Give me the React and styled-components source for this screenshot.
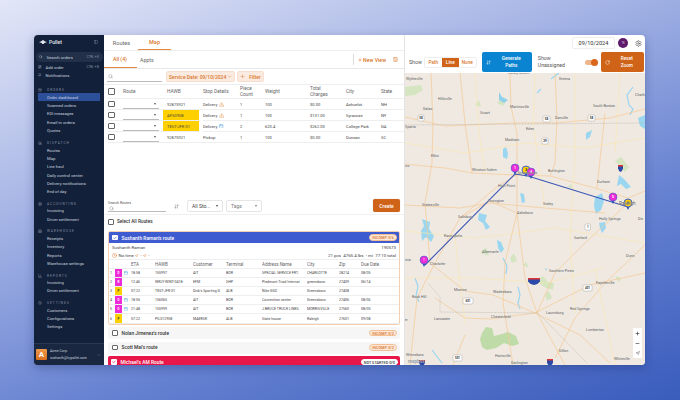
import React from 'react'
import styled, { createGlobalStyle } from 'styled-components'
import { Search, FilePlus, Bell, Package, Truck, CircleDollarSign, Warehouse, BarChart3, Settings, ChevronDown, Plus, Columns3, ArrowDownUp, Clock, RotateCw, Check, AlertTriangle, Calendar, PanelLeft, Minus, Navigation } from 'lucide-react'

const GlobalStyle = createGlobalStyle`
  html, body { margin: 0; padding: 0; height: 100%; }
  body {
    width: 680px; height: 400px; overflow: hidden;
    background: linear-gradient(160deg, #e2e6f7 0%, #a9b7e6 32%, #6480d0 68%, #3a5cbc 100%);
    font-family: Roboto, "Liberation Sans", sans-serif;
    color: #333;
  }
  * { box-sizing: border-box; }
`

const Page = styled.div`
  padding: 35px 35px 35px 34px;
  height: 400px;
`
const Window = styled.div`
  display: flex;
  height: 330px;
  background: #fff;
  border-radius: 4px;
  overflow: hidden;
  box-shadow: 0 3px 10px rgba(30, 50, 110, 0.35);
`

/* sidebar */
const Sidebar = styled.aside`
  width: 70px;
  flex: none;
  background: #13203a;
  color: #c7d0de;
  display: flex;
  flex-direction: column;
  font-size: 4.2px;
`
const Brand = styled.div`
  display: flex;
  align-items: center;
  height: 14px;
  padding: 0 6px 0 5px;
  font-size: 5px;
  font-weight: 500;
  color: #e4e8ef;
  gap: 2px;
`
const BrandMark = styled.svg`
  width: 8px;
  height: 4.5px;
`
const BrandIcon = styled(PanelLeft)`
  margin-left: auto;
  color: #8c97aa;
`
const SearchBox = styled.div`
  display: flex;
  align-items: center;
  gap: 4px;
  height: 10px;
  margin: 3px 1px 1px 2px;
  padding: 0 4px 0 3px;
  border-radius: 5px;
  background: #223049;
  color: #c7d0de;
  font-size: 4.3px;
`
const Shortcut = styled.span`
  margin-left: auto;
  font-size: 3px;
  color: #8c97aa;
`
const TopItem = styled.div`
  display: flex;
  align-items: center;
  gap: 4px;
  height: 8px;
  padding: 0 5px 0 4px;
`
const Section = styled.div`
  display: flex;
  align-items: center;
  gap: 5px;
  height: 6px;
  margin-top: ${p => p.$gap}px;
  padding-left: 4px;
  font-size: 3.2px;
  letter-spacing: 1px;
  color: #8591a5;
`
const NavItem = styled.div`
  display: flex;
  align-items: center;
  height: 8.3px;
  margin: 0 4px;
  padding-left: 9px;
  background: ${p => (p.$active ? '#2d4f99' : 'transparent')};
`
const Account = styled.div`
  margin-top: auto;
  height: 22px;
  flex: none;
  display: flex;
  align-items: center;
  gap: 3px;
  padding: 0 3px 0 2px;
  background: #1a2740;
  border-top: 1px solid #2a3851;
`
const AccountLogo = styled.div`
  width: 11px;
  height: 11px;
  border-radius: 1px;
  background: linear-gradient(180deg, #f09a4a, #d96f1d);
  color: #fff;
  font-size: 8px;
  font-weight: 700;
  display: flex;
  align-items: center;
  justify-content: center;
`
const AccountText = styled.div`
  font-size: 3.4px;
  line-height: 6.5px;
  color: #c7d0de;
  white-space: nowrap;
`
const AccountChevron = styled(ChevronDown)`
  margin-left: auto;
  color: #8c97aa;
`

/* main column */
const Main = styled.main`
  width: 301px;
  flex: none;
  display: flex;
  flex-direction: column;
  border-right: 1px solid #e4e4e4;
  min-width: 0;
`
const TopTabs = styled.div`
  display: flex;
  flex: none;
  height: 16px;
  padding-left: 1px;
  border-bottom: 1px solid #eee;
`
const TopTab = styled.div`
  width: 33px;
  display: flex;
  align-items: center;
  justify-content: center;
  font-size: 5.6px;
  color: ${p => (p.$active ? '#d9772d' : '#666')};
  font-weight: ${p => (p.$active ? 500 : 400)};
  border-bottom: ${p => (p.$active ? '1px solid #e58a42' : 'none')};
`
const SubTabs = styled.div`
  display: flex;
  flex: none;
  align-items: center;
  height: 18px;
  border-bottom: 1px solid #e8e8e8;
  font-size: 5.2px;
`
const SubTab = styled.div`
  width: ${p => p.$w}px;
  height: 100%;
  display: flex;
  align-items: center;
  padding-left: ${p => p.$pad}px;
  color: ${p => (p.$active ? '#d9772d' : '#666')};
  font-weight: ${p => (p.$active ? 500 : 400)};
  border-bottom: ${p => (p.$active ? '1px solid #e58a42' : 'none')};
`
const NewView = styled.div`
  margin-left: auto;
  display: flex;
  align-items: center;
  gap: 1px;
  height: 11px;
  padding: 0 6px 0 4px;
  border-left: 1px solid #ddd;
  color: #d9772d;
  font-weight: 500;
  font-size: 5.2px;
`
const ColumnsIcon = styled(Columns3)`
  margin-left: 6px;
`
const FilterRow = styled.div`
  display: flex;
  flex: none;
  align-items: center;
  gap: 2px;
  height: 16px;
  padding-left: 3px;
  border-bottom: 1px solid #eee;
`
const SearchField = styled.div`
  width: 55px;
  height: 11px;
  display: flex;
  align-items: center;
  padding-left: 1px;
  border-bottom: 1px solid #bbb;
  color: #888;
  margin-right: 2px;
`
const Chip = styled.div`
  display: flex;
  align-items: center;
  gap: ${p => p.$gap ?? 1}px;
  height: 11px;
  padding: 0 2px;
  border-radius: 2px;
  background: #fbeadf;
  border: 1px solid #f6dfcf;
  color: #d9772d;
  font-size: 5px;
  font-weight: 500;
  white-space: nowrap;
`
const Table = styled.div`
  display: grid;
  flex: none;
  grid-template-columns: 15px 44px 36px 37px 25px 45px 36px 35px 1fr;
  padding-left: 4px;
  font-size: 4.1px;
  color: #444;
`
const HeadCell = styled.div`
  height: 14px;
  display: flex;
  align-items: center;
  font-size: 4.8px;
  line-height: 6px;
  color: #666;
  border-bottom: 1px solid #eee;
  white-space: nowrap;
`
const Cell = styled.div`
  height: 11px;
  display: flex;
  align-items: center;
  gap: 2px;
  border-bottom: 1px solid #eee;
  white-space: nowrap;
  margin: ${p => (p.$hawb ? '0 4px 0 -4px' : 0)};
  padding-left: ${p => (p.$hawb ? '4px' : 0)};
  background: ${p => (p.$hawb ? '#ffd000' : 'transparent')};
`
const Box = styled.span`
  width: ${p => p.$size ?? 6.5}px;
  height: ${p => p.$size ?? 6.5}px;
  flex: none;
  border: 1px solid #666;
  border-radius: 1px;
  background: #fff;
`
const RouteSelect = styled.div`
  width: 36px;
  height: 9px;
  margin-top: 1px;
  display: flex;
  align-items: center;
  justify-content: flex-end;
  padding-right: 3px;
  border-bottom: 1px solid #bbb;
  color: #555;
`
const Caret = styled.span`
  width: 0;
  height: 0;
  border-left: 1.5px solid transparent;
  border-right: 1.5px solid transparent;
  border-top: 2px solid currentColor;
`
const Spacer = styled.div`
  flex: none;
  height: 48px;
`

/* route panel */
const RouteTools = styled.div`
  display: flex;
  flex: none;
  align-items: flex-end;
  height: 24px;
  padding: 0 4px 2px 4px;
  border-bottom: 1px solid #f0f0f0;
`
const RouteSearch = styled.div`
  width: 58px;
  font-size: 3.6px;
  color: #555;
`
const RouteSearchInput = styled.div`
  height: 7px;
  display: flex;
  align-items: center;
  padding-left: 1px;
  border-bottom: 1px solid #bbb;
  color: #888;
`
const SortIcon = styled(ArrowDownUp)`
  color: #777;
  margin: 0 8.5px 3px 7.5px;
`
const Dropdown = styled.div`
  width: 36px;
  height: 12px;
  display: flex;
  align-items: center;
  justify-content: space-between;
  margin-right: 3px;
  padding: 0 4px;
  border: 1px solid #e5e5e5;
  border-radius: 2px;
  font-size: 5px;
  color: ${p => p.$color};
`
const CreateButton = styled.div`
  margin-left: auto;
  width: 27px;
  height: 13px;
  display: flex;
  align-items: center;
  justify-content: center;
  border-radius: 2px;
  background: #cf6317;
  color: #fff;
  font-size: 4.9px;
  font-weight: 500;
  box-shadow: 0 0 1px rgba(0,0,0,.3);
`
const SelectAll = styled.div`
  display: flex;
  flex: none;
  align-items: center;
  gap: 3px;
  height: 13px;
  margin-bottom: 3px;
  padding-left: 4px;
  font-size: 4.7px;
  font-weight: 500;
  color: #333;
`
const RouteCard = styled.div`
  flex: none;
  margin: 0 4px;
  border: 1px solid #f3cfb0;
  border-radius: 2px;
  overflow: hidden;
`
const RouteHeader = styled.div`
  display: flex;
  flex: none;
  align-items: center;
  gap: 4px;
  height: 11px;
  padding: 0 2px 0 3px;
  background: ${p => p.$bg};
  color: #fff;
  font-size: 4.9px;
  font-weight: 500;
`
const Badge = styled.span`
  margin-left: auto;
  height: 6.5px;
  padding: 0 2px;
  display: flex;
  align-items: center;
  border-radius: 3.5px;
  border: 1px solid ${p => (p.$white ? '#fff' : '#f3c096')};
  background: ${p => (p.$white ? '#fff' : '#fde8d8')};
  color: ${p => (p.$white ? '#333' : '#d9772d')};
  font-size: 3.8px;
  font-weight: 500;
  white-space: nowrap;
`
const DriverInfo = styled.div`
  display: flex;
  justify-content: space-between;
  padding: 0 3px;
  height: 8.5px;
  align-items: center;
  font-size: 4.4px;
  color: #444;
`
const StatusRow = styled(DriverInfo)`
  border-bottom: 1px solid #eee;
`
const NoTime = styled.span`
  display: flex;
  align-items: center;
  gap: 1.5px;
  color: #d9772d;
  & > em { font-style: normal; color: #444; }
`
const StopGrid = styled.div`
  display: grid;
  grid-template-columns: 6px 7px 9px 24px 38px 33px 36px 45px 32px 22px 1fr;
  font-size: 3.6px;
  color: #444;
`
const StopHead = styled.div`
  height: 9px;
  display: flex;
  align-items: center;
  font-size: 4.5px;
  color: #666;
  border-bottom: 1px solid #eee;
  white-space: nowrap;
  overflow: hidden;
`
const StopCell = styled.div`
  height: 9.1px;
  display: flex;
  align-items: center;
  border-bottom: 1px solid #eee;
  white-space: nowrap;
  overflow: hidden;
`
const NumCell = styled(StopCell)`
  padding-left: 1px;
`
const TypeTag = styled(StopCell)`
  justify-content: center;
  background: ${p => (p.$kind === 'P' ? '#ffd000' : '#ee2bd8')};
  color: ${p => (p.$kind === 'P' ? '#333' : '#fff')};
  font-size: 3px;
  font-weight: 700;
`
const MiniCal = styled(Calendar)`
  color: #4a9edb;
  margin-left: 2px;
`
const RouteRow = styled.div`
  display: flex;
  flex: none;
  align-items: center;
  gap: 4px;
  height: 12px;
  margin: 2.5px 4px 0;
  padding: 0 3px 0 4px;
  background: #f6f6f6;
  border-radius: 2px;
  font-size: 4.8px;
  font-weight: 500;
  color: #333;
`
const RedRow = styled(RouteHeader)`
  height: 12px;
  margin: 2.5px 4px 0;
  border-radius: 2px 2px 0 0;
`
const WhiteCheck = styled.span`
  width: 5.5px;
  height: 5.5px;
  flex: none;
  border-radius: 1px;
  background: #fff;
  display: inline-flex;
  align-items: center;
  justify-content: center;
  color: ${p => p.$color};
`

/* map column */
const MapColumn = styled.section`
  flex: 1;
  display: flex;
  flex-direction: column;
  min-width: 0;
`
const MapTop = styled.div`
  display: flex;
  flex: none;
  align-items: center;
  justify-content: flex-end;
  gap: 3px;
  height: 16px;
  padding-right: 3px;
`
const DateBox = styled.div`
  width: 43px;
  height: 12px;
  display: flex;
  align-items: center;
  justify-content: center;
  border: 1px solid #eee;
  border-radius: 2px;
  font-size: 5.6px;
  color: #333;
`
const Avatar = styled.div`
  width: 10px;
  height: 10px;
  border-radius: 50%;
  background: #5d1a6b;
  color: #e8d8ee;
  font-size: 2.6px;
  display: flex;
  align-items: center;
  justify-content: center;
`
const GearIcon = styled(Settings)`
  margin-left: 4px;
  color: #555;
`
const Controls = styled.div`
  display: flex;
  flex: none;
  align-items: center;
  height: 22px;
  padding-left: 4px;
  background: #fff;
  font-size: 5.2px;
  color: #555;
`
const Segment = styled.div`
  display: flex;
  height: 11px;
  margin-left: 2px;
  border: 1px solid #eee;
  border-radius: 2px;
`
const SegmentButton = styled.div`
  width: 17px;
  display: flex;
  align-items: center;
  justify-content: center;
  font-size: 4.7px;
  font-weight: 500;
  background: ${p => (p.$active ? '#cf6317' : '#fff')};
  color: ${p => (p.$active ? '#fff' : '#d9772d')};
`
const ActionButton = styled.div`
  width: ${p => p.$w}px;
  height: 20px;
  flex: none;
  margin-left: ${p => p.$ml}px;
  display: flex;
  align-items: center;
  padding-left: 4px;
  border-radius: 2px;
  background: ${p => p.$bg};
  color: #fff;
  font-size: 4.7px;
  font-weight: 500;
`
const ActionLabel = styled.span`
  flex: 1;
  text-align: center;
  line-height: 7.5px;
`
const UnassignedLabel = styled.div`
  width: 40px;
  margin-left: 6px;
  line-height: 7px;
`
const Toggle = styled.div`
  position: relative;
  width: 12px;
  height: 5px;
  margin-left: 7px;
  border-radius: 3px;
  background: #eeb58b;
`
const ToggleKnob = styled.span`
  position: absolute;
  right: -1px;
  top: -1px;
  width: 7px;
  height: 7px;
  border-radius: 50%;
  background: #d9661a;
`
const MapArea = styled.div`
  position: relative;
  flex: 1;
  background: #efe9e1;
  overflow: hidden;
`
const MapSvg = styled.svg`
  position: absolute;
  inset: 0;
  width: 100%;
  height: 100%;
`
const CityLabel = styled.span`
  position: absolute;
  font-size: ${p => p.$size ?? 3.7}px;
  line-height: 6px;
  color: #555;
  white-space: nowrap;
  text-shadow: 0 0 1px #fff;
`
const Attribution = styled.span`
  position: absolute;
  left: 3px;
  bottom: 0;
  font-size: 4.6px;
  line-height: 6px;
  font-weight: 700;
  color: #9aa3ad;
`
const ZoomPanel = styled.div`
  position: absolute;
  right: 3px;
  bottom: 7px;
  width: 9px;
  height: 30px;
  display: flex;
  flex-direction: column;
  align-items: center;
  justify-content: space-around;
  background: #fff;
  border-radius: 1px;
  color: #333;
`

const sections = [
  { icon: Package, label: 'ORDERS', gap: 8, items: ['Order dashboard', 'Scanned orders', 'EDI messages', 'Email-in orders', 'Quotes'] },
  { icon: Truck, label: 'DISPATCH', gap: 5.5, items: ['Routes', 'Map', 'Line haul', 'Daily control center', 'Delivery notifications', 'End of day'] },
  { icon: CircleDollarSign, label: 'ACCOUNTING', gap: 5, items: ['Invoicing', 'Driver settlement'] },
  { icon: Warehouse, label: 'WAREHOUSE', gap: 5, items: ['Receipts', 'Inventory', 'Reports', 'Warehouse settings'] },
  { icon: BarChart3, label: 'REPORTS', gap: 5, items: ['Invoicing', 'Driver settlement'] },
  { icon: Settings, label: 'SETTINGS', gap: 5, items: ['Customers', 'Configurations', 'Settings'] },
]

const orders = [
  { hawb: '92875921', stop: 'Delivery', flag: 'warn', pieces: '1', weight: '100', charges: '$0.00', city: 'Ashuelot', state: 'NH' },
  { hawb: 'AFS0908', yellow: true, stop: 'Delivery', flag: 'warn', pieces: '1', weight: '100', charges: '$131.00', city: 'Syracuse', state: 'NY' },
  { hawb: 'TEST-JFK-01', yellow: true, stop: 'Delivery', flag: 'cal', pieces: '2', weight: '620.4', charges: '$262.00', city: 'College Park', state: 'GA' },
  { hawb: '92875921', stop: 'Pickup', pieces: '1', weight: '100', charges: '$0.00', city: 'Duncan', state: 'SC' },
]

const stops = [
  { kind: 'D', cal: true, eta: '18:58', hawb: '155997', customer: 'AIT', terminal: 'BOR', address: 'SPECIAL SERVICE FRT.', city: 'CHARLOTTE', zip: '28214', due: '08/05' },
  { kind: 'R', eta: '12:46', hawb: 'WKLY-WINT-0418-', customer: 'EFM', terminal: 'SHP', address: 'Piedmont Triad Internat', city: 'greensboro', zip: '27409', due: '06/14' },
  { kind: 'P', eta: '07:22', hawb: 'TEST-JFK-01', customer: "Dick's Sporting G", terminal: 'ALB', address: 'Nike GSO', city: 'Greensboro', zip: '27408', due: '' },
  { kind: 'D', cal: true, eta: '18:55', hawb: '156065', customer: 'AIT', terminal: 'BOR', address: 'Convention center', city: 'Greensboro', zip: '27406', due: '08/06' },
  { kind: 'D', cal: true, eta: '21:48', hawb: '155999', customer: 'AIT', terminal: 'BOR', address: 'J BRUCE TRUCK LINES', city: 'MORRISVILLE', zip: '27560', due: '08/05' },
  { kind: 'P', eta: '07:22', hawb: 'PIL012908', customer: 'MAERSK', terminal: 'ALB', address: 'State house', city: 'Raleigh', zip: '27601', due: '09/08' },
]

// name, left, vertical centre in the map area
const cities = [
  ['Wytheville', 1, 6], ['Rocky Mount', 103, 0], ['Gretna', 154, 6], ['Chatham', 230, 22], ['Hillsville', 33, 26], ['Galax', 18, 36],
  ['Stuart', 75, 40], ['Martinsville', 105, 34], ['South Boston', 188, 33], ['Danville', 150, 45], ['Sparta', 0, 54], ['Eden', 121, 56],
  ['Madison', 100, 67], ['Elkin', 26, 83], ['Wilkesboro', -14, 93], ['Winston-Salem', 67, 97], ['Greensboro', 113, 100], ['Burlington', 143, 98],
  ['Durham', 192, 109], ['High Point', 93, 113], ['Lexington', 83, 128], ['Statesville', 17, 132], ['Staley', 138, 131],
  ['Salisbury', 53, 144], ['Asheboro', 112, 140], ['Holly Springs', 194, 146], ['Dix', 233, 146], ['Kannapolis', 39, 163], ['Sanford', 169, 165],
  ['Albemarle', 77, 179], ['Gastonia', -9, 187], ['Charlotte', 25, 191], ['Southern Pines', 144, 198], ['Dunn', 221, 183], ['Monroe', 49, 217],
  ['Wadesboro', 88, 219], ['Fayetteville', 191, 210], ['Red Springs', 165, 236], ['Rock Hill', 7, 224], ['Lancaster', 29, 246], ['Chesterfield', 86, 244],
  ['Chester', -10, 247], ['Laurinburg', 141, 240], ['Lumberton', 181, 257], ['Dillon', 154, 278], ['Winnsboro', 1, 282], ['Hartsville', 90, 283],
  ['Darlington', 106, 290], ['Whiteville', 209, 286],
]

const usShields = [
  [13, 42, 6, '58'], [138, 43, 7, '58'], [183, 42, 7, '58'], [137, 65, 6, '29'], [180, 151, 5.5, '1'], [58, 225, 10, '601'], [178, 212, 9, '401'], [48, 282, 9, '501'],
]

const PinMark = ({ x, y, fill, label }) => (
  <g>
    <path d={`M${x - 2} ${y + 3} L${x} ${y + 7} L${x + 2} ${y + 3} Z`} fill="#2f55b8" />
    <circle cx={x} cy={y} r="4" fill={fill} stroke="#3f63c8" strokeWidth={fill === '#ffd000' ? 1 : 0.6} />
    <text x={x} y={y + 1.3} fontSize="3.6" fontWeight="700" textAnchor="middle" fontFamily="Roboto, sans-serif" fill={fill === '#ffd000' ? '#333' : '#fff'}>{label}</text>
  </g>
)

const Interstate = ({ x, y, w, h }) => (
  <g>
    <path d={`M${x} ${y} h${w} v${h * 0.5} q${-w * 0.15} ${h * 0.4} ${-w / 2} ${h * 0.5} q${-w * 0.35} ${-h * 0.1} ${-w / 2} ${-h * 0.5} Z`} fill="#2b4aa8" />
    <rect x={x} y={y} width={w} height={h * 0.22} fill="#d33" />
  </g>
)

const MapDrawing = () => (
  <MapSvg viewBox="0 0 240 292" preserveAspectRatio="none">
    {/* parks */}
    <path d="M77 260 l4 -6 l6 1 l2 8 l8 -2 l6 -2 l8 4 l3 8 l-7 2 l-8 -3 l-8 5 l-9 2 l-5 -3 l-2 -8 Z" fill="#bfdba8" />
    <path d="M0 14 l16 -2 l2 5 l-8 5 l-10 1 Z M133 206 l5 -3 l5 6 l6 1 l-1 7 l-7 -2 l-5 -3 Z M140 221 l4 -3 l3 7 l-5 3 Z" fill="#d5e5c2" />
    <path d="M70 32 l4 -5 l2 7 Z M92 30 l6 -6 l4 3 l-4 6 Z M210 88 l6 -4 l8 10 l-4 5 Z M75 180 l6 -6 l3 9 Z M105 185 l4 -5 l3 8 l-5 2 Z M118 192 l3 -3 l3 6 Z M162 114 l4 -3 l2 4 Z M210 203 l6 2 l-2 5 Z" fill="#d5e5c2" />
    {/* water */}
    <path d="M94 19 l3 5 l6 3 l-4 3 l-5 -3 Z" fill="#8fd0ec" />
    <path d="M98 76 l3 -2 l2 6 l-1 6 l-4 -2 Z M181 60 l6 -3 l-2 7 l-4 3 Z M17 146 l8 3 l-1 7 l5 7 l-3 6 l-5 -5 l-4 4 l-1 -10 l3 -5 Z M74 140 l8 2 l-2 6 l5 6 l-4 3 l-3 -7 l-5 -3 Z M190 124 l7 -4 l2 8 l-3 9 l-5 4 l-2 -8 Z M214 102 l5 4 l7 8 l-5 2 l-5 -5 l-4 2 Z M92 167 l4 2 l3 7 l-3 4 l-3 -5 Z M194 150 l6 -1 l1 6 l-4 5 l-2 -5 Z M115 120 l4 1 l1 8 l-3 1 Z M233 45 l7 -3 v14 l-5 -3 Z M140 195 l2 1 l-1 2 Z" fill="#9ad6f0" />
    <path d="M10 205 l3 8 l-2 10 l3 6 M98 185 l4 8 l-1 8 M113 214 l2 8 l-2 8 l2 6 M27 277 l6 8 l4 5 M228 14 l-6 8 l2 10 l4 4 l-3 6 M136 16 l-4 4 M154 0 l-8 6" fill="none" stroke="#9ad6f0" strokeWidth="1.2" />
    {/* roads */}
    <g fill="none" stroke="#f6c994" strokeWidth="0.7">
      <path d="M0 91 L40 95 L67 100 L110 102 L145 103 L190 115 L223 125 L240 118" />
      <path d="M0 44 L40 53 L110 50 L150 50 L205 45 L240 36" />
      <path d="M105 0 L106 34 L112 60 L112 100 L112 140 L100 190 L98 230 L108 292" />
      <path d="M115 100 L93 113 L55 145 L30 190 L12 225 L5 292" />
      <path d="M223 130 L180 170 L150 200 L132 240 L160 292" />
      <path d="M26 0 L28 50 L27 90 L20 130 L25 190" />
      <path d="M240 172 L200 210 L170 245 L150 285" />
      <path d="M25 190 L60 218 L88 222 L130 240 L185 212 L240 200" />
      <path d="M30 225 L60 245 L86 246 L130 240 M130 240 L175 262 L205 290" />
      <path d="M150 0 L152 45 L150 90 L145 103 M55 0 L60 50 L67 100 M200 40 L192 115" />
      <path d="M0 132 L55 135 L85 130 L140 135 L200 140 M60 262 L48 292" />
      <path d="M112 140 L85 128 L55 145 M132 240 L120 205 L112 140" />
    </g>
    <g fill="none" stroke="#fbe7ae" strokeWidth="0.6">
      <path d="M0 70 L60 80 L120 70 L180 75 L240 65 M0 158 L70 165 L150 155 L240 170 M0 205 L70 205 L140 210 L200 195 M70 0 L74 60 L80 100 M170 0 L170 80 L165 165 L170 240 M215 0 L210 80 M50 165 L60 250 M130 0 L128 50 L135 100 L140 135 M190 195 L210 292" />
    </g>
    {/* state lines */}
    <path d="M0 52 L240 50 M23 210 L35 224 L35 239 L133 240 L182 290" fill="none" stroke="#b4b0aa" strokeWidth="0.5" strokeDasharray="1 .5" />
    {/* route */}
    <path d="M20 192 L110 101 L123 103 L223 134" fill="none" stroke="#3b55b5" strokeWidth="1.1" />
    {/* highway shields */}
    <Interstate x={123} y={205} w={12} h={7} />
    <Interstate x={213} y={92} w={5} h={7} />
    <Interstate x={142} y={286} w={6} h={7} />
    <Interstate x={14} y={287} w={6} h={6} />
    {usShields.map(([x, y, w, label]) => (
      <g key={`${x}-${y}`}>
        <rect x={x} y={y} width={w} height="6" rx="1" fill="#fff" stroke="#777" strokeWidth="0.3" />
        <text x={x + w / 2} y={y + 4.2} fontSize="3" fontWeight="700" textAnchor="middle" fontFamily="Roboto, sans-serif" fill="#333">{label}</text>
      </g>
    ))}
    {/* pins */}
    <PinMark x={110} y={95} fill="#ee2bd8" label="1" />
    <PinMark x={121} y={97} fill="#ffd000" label="3" />
    <PinMark x={126} y={99} fill="#ee2bd8" label="4" />
    <PinMark x={208} y={124} fill="#ee2bd8" label="5" />
    <PinMark x={223} y={130} fill="#ffd000" label="6" />
    <PinMark x={19} y={187} fill="#ee2bd8" label="!" />
  </MapSvg>
)

export default function App() {
  return (
    <Page>
      <GlobalStyle />
      <Window>
        <Sidebar>
          <Brand>
            <BrandMark viewBox="0 0 18 10"><path d="M0 5 L5 3 L9 0 L13 3 L18 5 L13 6 L9 10 L5 6 Z" fill="#e4e8ef" /></BrandMark>
            Pullet
            <BrandIcon size={4} />
          </Brand>
          <SearchBox><Search size={3.5} />Search orders<Shortcut>CTRL + K</Shortcut></SearchBox>
          <TopItem><FilePlus size={3.5} />Add order<Shortcut>CTRL + N</Shortcut></TopItem>
          <TopItem><Bell size={3.5} />Notifications</TopItem>
          {sections.map(section => (
            <React.Fragment key={section.label}>
              <Section $gap={section.gap}><section.icon size={4} />{section.label}</Section>
              {section.items.map(item => (
                <NavItem key={item} $active={item === 'Order dashboard'}>{item}</NavItem>
              ))}
            </React.Fragment>
          ))}
          <Account>
            <AccountLogo>A</AccountLogo>
            <AccountText>Acme Corp.<br />sushanth@trypallet.com</AccountText>
            <AccountChevron size={4} />
          </Account>
        </Sidebar>

        <Main>
          <TopTabs>
            <TopTab>Routes</TopTab>
            <TopTab $active>Map</TopTab>
          </TopTabs>
          <SubTabs>
            <SubTab $active $w={33} $pad={9}>All (4)</SubTab>
            <SubTab $w={30} $pad={3}>Appts</SubTab>
            <NewView><Plus size={4} strokeWidth={3} />New View<ColumnsIcon size={5} /></NewView>
          </SubTabs>
          <FilterRow>
            <SearchField><Search size={5} /></SearchField>
            <Chip>Service Date: 09/10/2024<ChevronDown size={5} /></Chip>
            <Chip $gap={4}><Plus size={5} />Filter</Chip>
          </FilterRow>
          <Table>
            <HeadCell><Box /></HeadCell>
            <HeadCell>Route</HeadCell>
            <HeadCell>HAWB</HeadCell>
            <HeadCell>Stop Details</HeadCell>
            <HeadCell>Piece<br />Count</HeadCell>
            <HeadCell>Weight</HeadCell>
            <HeadCell>Total<br />Charges</HeadCell>
            <HeadCell>City</HeadCell>
            <HeadCell>State</HeadCell>
            {orders.map((o, i) => (
              <React.Fragment key={i}>
                <Cell><Box /></Cell>
                <Cell><RouteSelect><Caret /></RouteSelect></Cell>
                <Cell $hawb={o.yellow}>{o.hawb}</Cell>
                <Cell>
                  {o.stop}
                  {o.flag === 'warn' && <AlertTriangle size={5} color="#e58a42" />}
                  {o.flag === 'cal' && <Calendar size={4.5} color="#4a9edb" />}
                </Cell>
                <Cell>{o.pieces}</Cell>
                <Cell>{o.weight}</Cell>
                <Cell>{o.charges}</Cell>
                <Cell>{o.city}</Cell>
                <Cell>{o.state}</Cell>
              </React.Fragment>
            ))}
          </Table>
          <Spacer />
          <RouteTools>
            <RouteSearch>
              Search Routes
              <RouteSearchInput><Search size={5} /></RouteSearchInput>
            </RouteSearch>
            <SortIcon size={5} />
            <Dropdown $color="#444"><span>All Sto...</span><Caret /></Dropdown>
            <Dropdown $color="#777"><span>Tags</span><Caret /></Dropdown>
            <CreateButton>Create</CreateButton>
          </RouteTools>
          <SelectAll><Box $size={6} />Select All Routes</SelectAll>
          <RouteCard>
            <RouteHeader $bg="#3f5bd0">
              <WhiteCheck $color="#3f5bd0"><Check size={4} strokeWidth={4} /></WhiteCheck>
              Sushanth Raman's route
              <Badge>INCOMP. 0/6</Badge>
            </RouteHeader>
            <DriverInfo><span>Sushanth Raman</span><span>190573</span></DriverInfo>
            <StatusRow>
              <NoTime><Clock size={5} /><em>No time</em><Navigation size={3.5} /><em>-</em><Navigation size={3.5} /><em>-</em></NoTime>
              <span>21 pcs&nbsp;&nbsp;4765.4 lbs&nbsp;&nbsp;- mi&nbsp;&nbsp;77:10 total</span>
            </StatusRow>
            <StopGrid>
              <StopHead />
              <StopHead />
              <StopHead />
              <StopHead>ETA</StopHead>
              <StopHead>HAWB</StopHead>
              <StopHead>Customer</StopHead>
              <StopHead>Terminal</StopHead>
              <StopHead>Address Name</StopHead>
              <StopHead>City</StopHead>
              <StopHead>Zip</StopHead>
              <StopHead>Due Date</StopHead>
              {stops.map((s, i) => (
                <React.Fragment key={i}>
                  <NumCell>{i + 1}</NumCell>
                  <TypeTag $kind={s.kind}>{s.kind}</TypeTag>
                  <StopCell>{s.cal && <MiniCal size={4} />}</StopCell>
                  <StopCell>{s.eta}</StopCell>
                  <StopCell>{s.hawb}</StopCell>
                  <StopCell>{s.customer}</StopCell>
                  <StopCell>{s.terminal}</StopCell>
                  <StopCell>{s.address}</StopCell>
                  <StopCell>{s.city}</StopCell>
                  <StopCell>{s.zip}</StopCell>
                  <StopCell>{s.due}</StopCell>
                </React.Fragment>
              ))}
            </StopGrid>
          </RouteCard>
          <RouteRow><Box $size={5.5} />Nolan Jimenez's route<Badge>INCOMP. 0/2</Badge></RouteRow>
          <RouteRow><Box $size={5.5} />Scott Mai's route<Badge>INCOMP. 0/2</Badge></RouteRow>
          <RedRow $bg="#e8174a">
            <WhiteCheck $color="#e8174a"><Check size={4} strokeWidth={4} /></WhiteCheck>
            Michael's AM Route
            <Badge $white>NOT STARTED 0/0</Badge>
          </RedRow>
        </Main>

        <MapColumn>
          <MapTop>
            <DateBox>09/10/2024</DateBox>
            <Avatar>TK</Avatar>
            <GearIcon size={7} />
          </MapTop>
          <Controls>
            Show
            <Segment>
              <SegmentButton>Path</SegmentButton>
              <SegmentButton $active>Line</SegmentButton>
              <SegmentButton>None</SegmentButton>
            </Segment>
            <ActionButton $bg="#0a84d0" $w={50} $ml={5}><ArrowDownUp size={5} /><ActionLabel>Generate<br />Paths</ActionLabel></ActionButton>
            <UnassignedLabel>Show<br />Unassigned</UnassignedLabel>
            <Toggle><ToggleKnob /></Toggle>
            <ActionButton $bg="#cf6317" $w={43} $ml={4}><RotateCw size={5} /><ActionLabel>Reset<br />Zoom</ActionLabel></ActionButton>
          </Controls>
          <MapArea>
            <MapDrawing />
            {cities.map(([name, x, y]) => (
              <CityLabel key={name} style={{ left: x, top: y - 3 }}>{name}</CityLabel>
            ))}
            <CityLabel $size={5} style={{ left: 214, top: 127 }}>Raleigh</CityLabel>
            <Attribution>mapbox</Attribution>
            <ZoomPanel>
              <Plus size={5} strokeWidth={3} />
              <Minus size={5} strokeWidth={3} />
              <Navigation size={4} />
            </ZoomPanel>
          </MapArea>
        </MapColumn>
      </Window>
    </Page>
  )
}
